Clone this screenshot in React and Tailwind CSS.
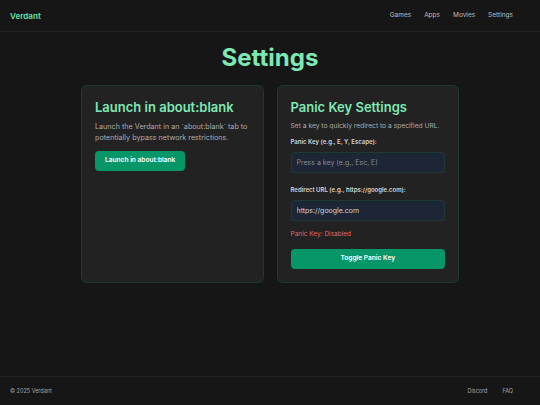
import React, { useState } from "react";

const App = () => {
  const [enabled, setEnabled] = useState(false);
  const [url, setUrl] = useState("https://google.com");

  return (
    <div
      className="flex min-h-screen flex-col bg-[#161616] text-[#d4d4d4]"
      style={{ fontFamily: "Inter, 'Noto Sans', sans-serif" }}
    >
      {/* header */}
      <header className="flex h-8 items-center justify-between border-b border-[#262626] pl-[10px] pr-[27px]">
        <span className="text-[8px] font-bold text-[#5fd49c]">Verdant</span>
        <nav className="flex gap-[13px] text-[6.5px] text-[#bdbdbd]">
          <a>Games</a>
          <a>Apps</a>
          <a>Movies</a>
          <a>Settings</a>
        </nav>
      </header>

      <main className="flex flex-1 flex-col items-center">
        <h1 className="mt-[8px] text-[24px] leading-[36px] font-bold text-[#7ee8b5]">Settings</h1>

        <div className="mt-[9px] grid w-[378px] grid-cols-2 gap-[13px]">
          {/* about:blank card */}
          <div className="h-[198px] rounded-[6px] border border-[#1f3a2e] bg-[#222222] px-[13px] pt-[12px]">
            <h2 className="text-[13px] leading-[18px] font-semibold text-[#7ee8b5]">Launch in about:blank</h2>
            <p className="mt-[5px] text-[7.2px] leading-[11px] text-[#ababab]">
              Launch the Verdant in an `about:blank` tab to potentially bypass network restrictions.
            </p>
            <button className="mt-[8px] h-[20px] rounded-[4px] bg-[#069668] px-[10px] text-[6.6px] font-semibold text-white">
              Launch in about:blank
            </button>
          </div>

          {/* panic key card */}
          <div className="h-[198px] rounded-[6px] border border-[#1f3a2e] bg-[#222222] px-[13px] pt-[12px]">
            <h2 className="text-[13px] leading-[18px] font-semibold text-[#7ee8b5]">Panic Key Settings</h2>
            <p className="mt-[5px] whitespace-nowrap text-[6.7px] leading-[11px] text-[#ababab]">
              Set a key to quickly redirect to a specified URL.
            </p>
            <label className="mt-[5px] block text-[6px] leading-[9px] font-semibold text-[#d4d4d4]">
              Panic Key (e.g., E, Y, Escape):
            </label>
            <input
              readOnly
              placeholder="Press a key (e.g., Esc, E)"
              className="mt-[6px] block h-[21px] w-full rounded-[3px] border border-[#1f3a2e] bg-[#1d2636] px-[5px] text-[7px] text-[#d4d4d4] outline-none placeholder:text-[#838b98]"
            />
            <label className="mt-[12px] block text-[6px] leading-[9px] font-semibold text-[#d4d4d4]">
              Redirect URL (e.g., https://google.com):
            </label>
            <input
              value={url}
              onChange={(e) => setUrl(e.target.value)}
              className="mt-[6px] block h-[21px] w-full rounded-[3px] border border-[#1f3a2e] bg-[#1d2636] px-[5px] text-[7px] text-[#d4d4d4] outline-none"
            />
            <p className={"mt-[8px] text-[6.5px] leading-[10px] " + (enabled ? "text-[#5fd49c]" : "text-[#e06666]")}>
              Panic Key: {enabled ? "Enabled" : "Disabled"}
            </p>
            <button
              onClick={() => setEnabled(!enabled)}
              className="mt-[10px] h-[20px] w-full rounded-[4px] bg-[#069668] text-[6.6px] font-semibold text-white"
            >
              Toggle Panic Key
            </button>
          </div>
        </div>
      </main>

      {/* footer */}
      <footer className="flex h-[29px] items-center justify-between border-t border-[#262626] pl-[10px] pr-[27px] text-[5.5px] text-[#a3a3a3]">
        <span>© 2025 Verdant</span>
        <div className="flex gap-[15px]">
          <a>Discord</a>
          <a>FAQ</a>
        </div>
      </footer>
    </div>
  );
};

export default App;
